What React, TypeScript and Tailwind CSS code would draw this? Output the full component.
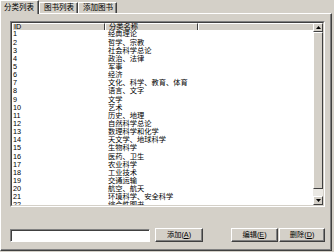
import React from 'react';

const categories: string[] = [
  '经典理论',
  '哲学、宗教',
  '社会科学总论',
  '政治、法律',
  '军事',
  '经济',
  '文化、科学、教育、体育',
  '语言、文字',
  '文学',
  '艺术',
  '历史、地理',
  '自然科学总论',
  '数理科学和化学',
  '天文学、地球科学',
  '生物科学',
  '医药、卫生',
  '农业科学',
  '工业技术',
  '交通运输',
  '航空、航天',
  '环境科学、安全科学',
  '综合性图书',
];

const Tab = ({ label, active }: { label: string; active?: boolean }) => (
  <div
    className={`${active ? 'h-[14px] -mb-px z-10 pl-[3px] pr-[4px]' : 'h-[11px] pl-[4px] pr-[3px]'} relative flex items-center bg-[#d4d0c8] border-t border-l border-white border-r border-r-[#404040] shadow-[inset_-1px_0_0_#808080]`}
  >
    <span className="leading-none">{label}</span>
  </div>
);

const Button = ({ label, hotkey, width }: { label: string; hotkey: string; width: string }) => (
  <button
    className={`${width} h-[14px] flex items-center justify-center bg-[#d4d0c8] border-t border-l border-white border-b border-r border-b-[#404040] border-r-[#404040] shadow-[inset_-1px_-1px_0_#808080] leading-none`}
  >
    {label}(<span className="underline">{hotkey}</span>)
  </button>
);

const Arrow = ({ up }: { up?: boolean }) => (
  <div className="h-[9px] flex items-center justify-center bg-[#d4d0c8] border-t border-l border-white border-b border-r border-b-[#404040] border-r-[#404040]">
    <svg width="5" height="3" viewBox="0 0 5 3">
      <polygon points={up ? '2.5,0 5,3 0,3' : '0,0 5,0 2.5,3'} fill="#000" />
    </svg>
  </div>
);

const App: React.FC = () => {
  return (
    <div className="w-[334px] h-[252px] bg-[#d4d0c8] overflow-hidden flex flex-col text-[7.25px] text-black font-['Liberation_Sans','Noto_Sans_CJK_SC',sans-serif]">
      <div className="h-[13px] flex items-end text-[7.5px]">
        <Tab label="分类列表" active />
        <Tab label="图书列表" />
        <Tab label="添加图书" />
      </div>

      <div className="w-[332px] h-[238px] flex flex-col border-t border-l border-white border-r border-b border-r-[#404040] border-b-[#404040] shadow-[inset_-1px_-1px_0_#808080] pt-[7px] pl-[9px]">
        <div className="w-[315px] h-[186px] border-t border-l border-[#808080] border-b border-r border-b-white border-r-white">
          <div className="h-full flex bg-white border-t border-l border-[#404040] border-b border-r border-b-[#d4d0c8] border-r-[#d4d0c8]">
            <div className="flex-1 flex flex-col overflow-hidden">
              <div className="h-[7px] flex bg-[#d4d0c8]">
                <div className="w-[93px] pl-[1px] flex items-center border-t border-l border-white border-r border-r-[#404040] leading-none">ID</div>
                <div className="w-[93px] pl-[3px] flex items-center border-t border-l border-white border-r border-r-[#404040] leading-none">分类名称</div>
                <div className="flex-1 border-t border-l border-white" />
              </div>
              <div className="flex-1 overflow-hidden">
                {categories.map((name, i) => (
                  <div key={i} className="h-[8.15px] flex items-center whitespace-nowrap leading-none">
                    <span className="w-[93px] pl-[1px] shrink-0">{i + 1}</span>
                    <span className="pl-[3px]">{name}</span>
                  </div>
                ))}
              </div>
            </div>
            <div className="w-[10px] flex flex-col bg-[#ebe9e4]">
              <Arrow up />
              <div className="h-[157px] bg-[#d4d0c8] border-t border-l border-white border-b border-r border-b-[#404040] border-r-[#404040]" />
              <div className="flex-1" />
              <Arrow />
            </div>
          </div>
        </div>

        <div className="mt-[21px] flex items-center">
          <div className="w-[140px] h-[13px] bg-white border-t border-l border-[#808080] border-b border-r border-b-white border-r-white shadow-[inset_1px_1px_0_#404040]" />
          <div className="ml-[5px]">
            <Button label="添加" hotkey="A" width="w-[48px]" />
          </div>
          <div className="ml-[28px]">
            <Button label="编辑" hotkey="E" width="w-[47px]" />
          </div>
          <div className="ml-[1px]">
            <Button label="删除" hotkey="D" width="w-[46px]" />
          </div>
        </div>
      </div>
    </div>
  );
};

export default App;
